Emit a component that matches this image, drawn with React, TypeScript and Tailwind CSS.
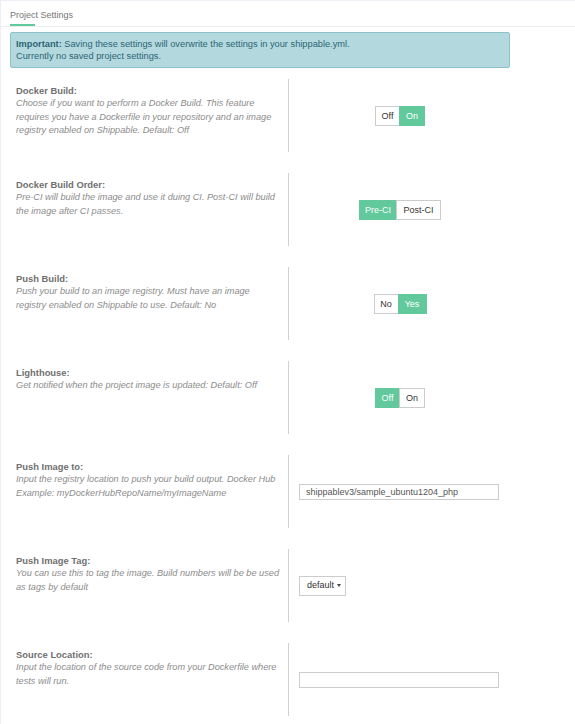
import React from "react";

const green = "bg-[#62c99d] border-[#62c99d] text-white";
const plain = "bg-white border-[#cccccc] text-[#333]";

type Opt = { label: string; w: string; on?: boolean };

function Toggle({ opts }: { opts: Opt[] }) {
  return (
    <div className="flex">
      {opts.map((o, i) => (
        <span
          key={i}
          className={`h-[20px] border text-center text-[9px] leading-[18px] ${o.w} ${o.on ? green : plain} ${i > 0 ? "-ml-px" : ""}`}
        >
          {o.label}
        </span>
      ))}
    </div>
  );
}

function Row({
  title,
  desc,
  children,
  center = true,
}: {
  title: string;
  desc: string;
  children: React.ReactNode;
  center?: boolean;
}) {
  return (
    <div className="flex h-[73px] mb-[21px]">
      <div className="w-[287px] pl-[15px] pr-[7px] pt-[5px] leading-[13.4px]">
        <div className="font-bold text-[9.4px] text-[#707070]">{title}</div>
        <div className="italic text-[9.2px] text-[#8c8c8c]">{desc}</div>
      </div>
      <div
        className={`w-[223px] border-l border-[#d0d0d0] flex items-center pl-[10px] ${center ? "justify-center pr-[10px]" : ""}`}
      >
        {children}
      </div>
    </div>
  );
}

export default function App() {
  return (
    <div className="w-[575px] h-[724px] overflow-hidden bg-white border-l border-t border-[#eceff4] font-['Liberation_Sans',Arial,sans-serif]">
      <div className="h-[26px] border-b border-[#ececec] pl-[9px] pt-[9px]">
        <div className="text-[9px] leading-[11px] text-[#777]">Project Settings</div>
        <div className="mt-[3px] w-[25px] h-[2px] bg-[#62c99d]" />
      </div>

      <div className="ml-[9px] mt-[5px] w-[500px] h-[36px] rounded-[2px] border border-[#8dc2cb] bg-[#b3d8de] px-[5px] py-[5px] text-[9.25px] leading-[12px] text-[#2d6675]">
        <div>
          <span className="font-bold">Important:</span> Saving these settings will overwrite the settings in your shippable.yml.
        </div>
        <div>Currently no saved project settings.</div>
      </div>

      <div className="mt-[11px]">
        <Row
          title="Docker Build:"
          desc="Choose if you want to perform a Docker Build. This feature requires you have a Dockerfile in your repository and an image registry enabled on Shippable. Default: Off"
        >
          <Toggle
            opts={[
              { label: "Off", w: "w-[25px]" },
              { label: "On", w: "w-[26px]", on: true },
            ]}
          />
        </Row>
        <Row
          title="Docker Build Order:"
          desc="Pre-CI will build the image and use it duing CI. Post-CI will build the image after CI passes."
        >
          <Toggle
            opts={[
              { label: "Pre-CI", w: "w-[38px]", on: true },
              { label: "Post-CI", w: "w-[45px]" },
            ]}
          />
        </Row>
        <Row
          title="Push Build:"
          desc="Push your build to an image registry. Must have an image registry enabled on Shippable to use. Default: No"
        >
          <Toggle
            opts={[
              { label: "No", w: "w-[25px]" },
              { label: "Yes", w: "w-[29px]", on: true },
            ]}
          />
        </Row>
        <Row
          title="Lighthouse:"
          desc="Get notified when the project image is updated: Default: Off"
        >
          <Toggle
            opts={[
              { label: "Off", w: "w-[25px]", on: true },
              { label: "On", w: "w-[26px]" },
            ]}
          />
        </Row>
        <Row
          title="Push Image to:"
          desc="Input the registry location to push your build output. Docker Hub Example: myDockerHubRepoName/myImageName"
          center={false}
        >
          <div className="w-[200px] h-[16px] border border-[#cccccc] px-[6px] text-[9px] leading-[14px] text-[#555]">
            shippablev3/sample_ubuntu1204_php
          </div>
        </Row>
        <Row
          title="Push Image Tag:"
          desc="You can use this to tag the image. Build numbers will be be used as tags by default"
          center={false}
        >
          <div className="h-[20px] w-[47px] border border-[#cccccc] flex items-center pl-[7px] gap-[3px] text-[9px] text-[#333]">
            default
            <span className="w-0 h-0 border-l-[2.5px] border-r-[2.5px] border-t-[3px] border-l-transparent border-r-transparent border-t-[#444]" />
          </div>
        </Row>
        <Row
          title="Source Location:"
          desc="Input the location of the source code from your Dockerfile where tests will run."
          center={false}
        >
          <div className="w-[200px] h-[16px] border border-[#cccccc]" />
        </Row>
      </div>
    </div>
  );
}
